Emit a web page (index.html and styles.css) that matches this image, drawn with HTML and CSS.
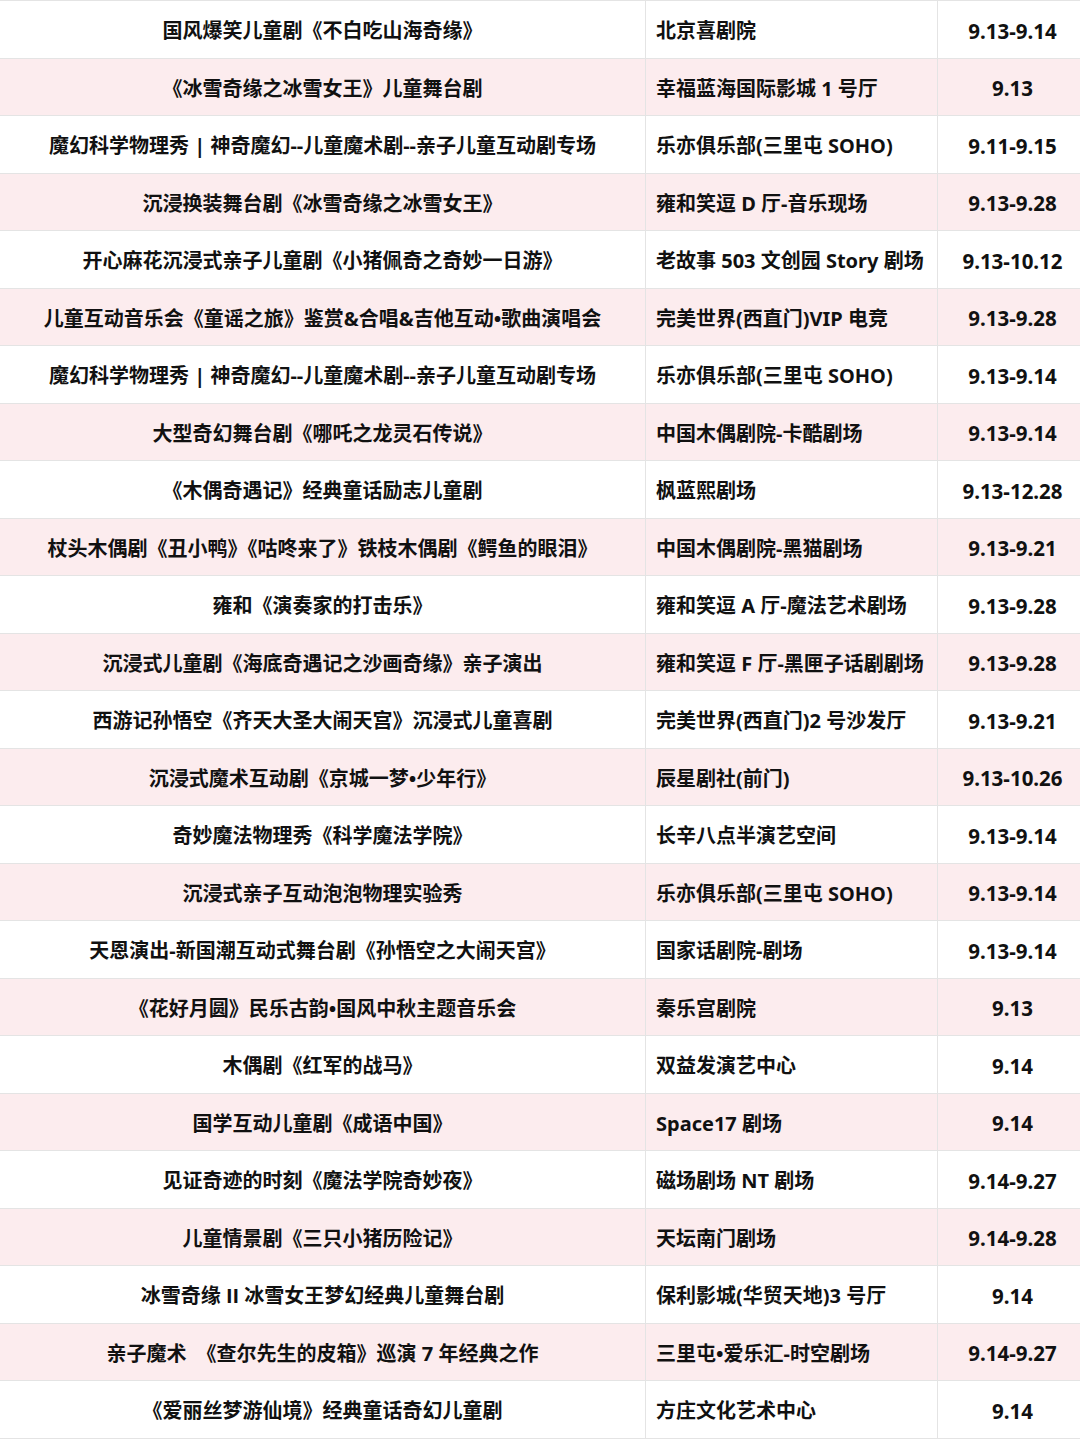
FILE: index.html
```html
<!DOCTYPE html>
<html lang="zh-CN">
<head>
<meta charset="utf-8">
<title>演出列表</title>
<link rel="stylesheet" href="styles.css">
</head>
<body>
<table class="shows">
<tbody>
<tr><td class="name">国风爆笑儿童剧《不白吃山海奇缘》</td><td class="venue">北京喜剧院</td><td class="date">9.13-9.14</td></tr>
<tr><td class="name">《冰雪奇缘之冰雪女王》儿童舞台剧</td><td class="venue">幸福蓝海国际影城 1 号厅</td><td class="date">9.13</td></tr>
<tr><td class="name">魔幻科学物理秀 | 神奇魔幻--儿童魔术剧--亲子儿童互动剧专场</td><td class="venue">乐亦俱乐部(三里屯 SOHO)</td><td class="date">9.11-9.15</td></tr>
<tr><td class="name">沉浸换装舞台剧《冰雪奇缘之冰雪女王》</td><td class="venue">雍和笑逗 D 厅-音乐现场</td><td class="date">9.13-9.28</td></tr>
<tr><td class="name">开心麻花沉浸式亲子儿童剧《小猪佩奇之奇妙一日游》</td><td class="venue">老故事 503 文创园 Story 剧场</td><td class="date">9.13-10.12</td></tr>
<tr><td class="name">儿童互动音乐会《童谣之旅》鉴赏&amp;合唱&amp;吉他互动•歌曲演唱会</td><td class="venue">完美世界(西直门)VIP 电竞</td><td class="date">9.13-9.28</td></tr>
<tr><td class="name">魔幻科学物理秀 | 神奇魔幻--儿童魔术剧--亲子儿童互动剧专场</td><td class="venue">乐亦俱乐部(三里屯 SOHO)</td><td class="date">9.13-9.14</td></tr>
<tr><td class="name">大型奇幻舞台剧《哪吒之龙灵石传说》</td><td class="venue">中国木偶剧院-卡酷剧场</td><td class="date">9.13-9.14</td></tr>
<tr><td class="name">《木偶奇遇记》经典童话励志儿童剧</td><td class="venue">枫蓝熙剧场</td><td class="date">9.13-12.28</td></tr>
<tr><td class="name">杖头木偶剧《丑小鸭》《咕咚来了》铁枝木偶剧《鳄鱼的眼泪》</td><td class="venue">中国木偶剧院-黑猫剧场</td><td class="date">9.13-9.21</td></tr>
<tr><td class="name">雍和《演奏家的打击乐》</td><td class="venue">雍和笑逗 A 厅-魔法艺术剧场</td><td class="date">9.13-9.28</td></tr>
<tr><td class="name">沉浸式儿童剧《海底奇遇记之沙画奇缘》亲子演出</td><td class="venue">雍和笑逗 F 厅-黑匣子话剧剧场</td><td class="date">9.13-9.28</td></tr>
<tr><td class="name">西游记孙悟空《齐天大圣大闹天宫》沉浸式儿童喜剧</td><td class="venue">完美世界(西直门)2 号沙发厅</td><td class="date">9.13-9.21</td></tr>
<tr><td class="name">沉浸式魔术互动剧《京城一梦•少年行》</td><td class="venue">辰星剧社(前门)</td><td class="date">9.13-10.26</td></tr>
<tr><td class="name">奇妙魔法物理秀《科学魔法学院》</td><td class="venue">长辛八点半演艺空间</td><td class="date">9.13-9.14</td></tr>
<tr><td class="name">沉浸式亲子互动泡泡物理实验秀</td><td class="venue">乐亦俱乐部(三里屯 SOHO)</td><td class="date">9.13-9.14</td></tr>
<tr><td class="name">天恩演出-新国潮互动式舞台剧《孙悟空之大闹天宫》</td><td class="venue">国家话剧院-剧场</td><td class="date">9.13-9.14</td></tr>
<tr><td class="name">《花好月圆》民乐古韵•国风中秋主题音乐会</td><td class="venue">秦乐宫剧院</td><td class="date">9.13</td></tr>
<tr><td class="name">木偶剧《红军的战马》</td><td class="venue">双益发演艺中心</td><td class="date">9.14</td></tr>
<tr><td class="name">国学互动儿童剧《成语中国》</td><td class="venue">Space17 剧场</td><td class="date">9.14</td></tr>
<tr><td class="name">见证奇迹的时刻《魔法学院奇妙夜》</td><td class="venue">磁场剧场 NT 剧场</td><td class="date">9.14-9.27</td></tr>
<tr><td class="name">儿童情景剧《三只小猪历险记》</td><td class="venue">天坛南门剧场</td><td class="date">9.14-9.28</td></tr>
<tr><td class="name">冰雪奇缘 <span class="plain">II</span> 冰雪女王梦幻经典儿童舞台剧</td><td class="venue">保利影城(华贸天地)3 号厅</td><td class="date">9.14</td></tr>
<tr><td class="name">亲子魔术　《查尔先生的皮箱》巡演 7 年经典之作</td><td class="venue">三里屯•爱乐汇-时空剧场</td><td class="date">9.14-9.27</td></tr>
<tr><td class="name">《爱丽丝梦游仙境》经典童话奇幻儿童剧</td><td class="venue">方庄文化艺术中心</td><td class="date">9.14</td></tr>
</tbody>
</table>
</body>
</html>
```
FILE: styles.css
```css
html, body {
  margin: 0;
  padding: 0;
  background: #ffffff;
}
body {
  font-family: "Noto Sans", "Noto Sans CJK SC", sans-serif;
  font-weight: 700;
  font-size: 20px;
  color: #111111;
}
.shows {
  width: 1080px;
  border-collapse: collapse;
  table-layout: fixed;
}
.shows tr {
  height: 57.5px;
}
.shows tr:nth-child(even) {
  background: #fcecee;
}
.shows td {
  border: 1px solid #e4e4e4;
  padding: 4px 0 0 0;
  white-space: nowrap;
  vertical-align: middle;
  line-height: 1.2;
}
.shows td.name {
  width: 645px;
  text-align: center;
}
.shows td.venue {
  width: 281px;
  text-align: left;
  padding-left: 10px;
}
.shows td.date {
  text-align: center;
  padding-left: 7px;
  font-size: 20.5px;
}
.shows td:first-child {
  border-left: none;
}
.shows td:last-child {
  border-right: none;
}
.plain {
  font-family: "Open Sans", "Liberation Sans", sans-serif;
}
```
